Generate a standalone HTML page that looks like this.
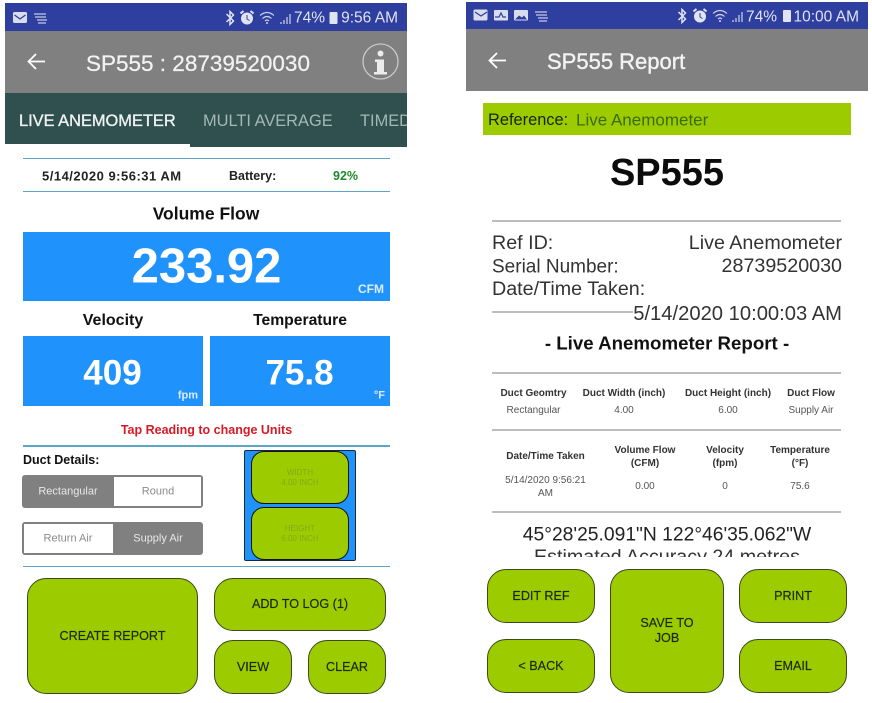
<!DOCTYPE html>
<html><head><meta charset="utf-8">
<style>
html,body{margin:0;padding:0;background:#fff}
#p{position:relative;width:872px;height:703px;overflow:hidden;background:#fff;font-family:"Liberation Sans",sans-serif;color:#111;filter:blur(.3px)}
.r{position:absolute}
.t{position:absolute;white-space:nowrap;line-height:1;transform:translateY(-50%)}
.c{transform:translate(-50%,-50%);text-align:center}
.e{transform:translate(-100%,-50%)}
.b{font-weight:bold}
.g{position:absolute;background:#9ccc00;border:1.5px solid #3a4a1c;box-sizing:border-box;border-radius:19px;color:#1d2a08;font-size:12.6px;-webkit-text-stroke:.2px #1d2a08;display:flex;align-items:center;justify-content:center;text-align:center;line-height:15px}
.l{position:absolute;height:2px;background:#bdbdbd}
.bl{position:absolute;height:1.5px;background:#5ba6c4}
</style></head><body><div id="p">

<!-- LEFT PHONE -->
<div class="r" style="left:5px;top:3px;width:402px;height:28px;background:#2e3f9f"></div>
<div class="r" style="left:5px;top:31px;width:402px;height:62px;background:#808080"></div>
<div class="r" style="left:5px;top:93px;width:402px;height:54px;background:#2f504f"></div>
<div class="r" style="left:5px;top:144px;width:185px;height:3px;background:#fff"></div>

<!-- RIGHT PHONE BARS -->
<div class="r" style="left:466px;top:2px;width:402px;height:27px;background:#2e3f9f"></div>
<div class="r" style="left:466px;top:29px;width:402px;height:62px;background:#808080"></div>

<svg class="r" style="left:0;top:0" width="872" height="703" fill="none">
 <!-- left status icons -->
 <rect x="13" y="12" width="14" height="11" rx="1.500" fill="#d8dcec"/>
 <path d="M14.500 15l5.500 4 5.500-4" stroke="#2e3f9f" stroke-width="1.300"/>
 <path d="M34 14h12M35 17h11M37 20h10M38 23h8" stroke="#c5cbe4" stroke-width="1.200"/>
 <path d="M226.500 14l7 7-3.500 3.500v-13l3.500 3.500-7 7" stroke="#e0e3f0" stroke-width="1.500"/>
 <circle cx="247" cy="18.500" r="6" fill="#e0e3f0"/>
 <path d="M240.500 13.500l3-2.500M253.500 13.500l-3-2.500" stroke="#e0e3f0" stroke-width="2"/>
 <path d="M247 15v4l2.500 1.500" stroke="#2e3f9f" stroke-width="1"/>
 <path d="M260 15.500q7-6 14 0M262.500 18.500q4.500-4 9 0M265 21q2-2 4 0" stroke="#cfd4e8" stroke-width="1.100"/>
 <circle cx="267" cy="23" r="1" fill="#cfd4e8"/>
 <path d="M281 24v-2M284 24v-4M287 24v-7M290 24v-10" stroke="#cfd4e8" stroke-width="1.200"/>
 <rect x="329.500" y="12" width="8" height="12" rx="1" fill="#e0e3f0"/>
 <!-- left back arrow -->
 <path d="M45 61.500H28.500M36 54l-7.500 7.500L36 69" stroke="#fff" stroke-width="1.800"/>
 <!-- info icon -->
 <circle cx="380.500" cy="61.500" r="17.500" stroke="#c8c8c8" stroke-width="1.300"/>
 <circle cx="380.500" cy="53.500" r="3" fill="#ececec"/>
 <path d="M375 59.500h9v12.500h3v2.500h-13v-2.500h3v-10h-2z" fill="#ececec"/>
 <!-- right status icons -->
 <rect x="473.500" y="9.500" width="14" height="11" rx="1.500" fill="#d8dcec"/>
 <path d="M475 12l6 4 6-4" stroke="#2e3f9f" stroke-width="1.300"/>
 <rect x="494" y="10" width="14" height="10.500" rx="1" fill="#d8dcec"/>
 <path d="M495 17l4 0 2-4 2 4 3 0" stroke="#2e3f9f" stroke-width="1.200"/>
 <rect x="514" y="10" width="14" height="10.500" rx="1" fill="#d8dcec"/>
 <path d="M515 19.500l4-4 3 2 2-2 3 4z" fill="#2e3f9f"/>
 <path d="M535 12h12M536 15h11M538 18h10M539 21h8" stroke="#c5cbe4" stroke-width="1.200"/>
 <path d="M678.500 12l7 7-3.500 3.500v-13l3.500 3.500-7 7" stroke="#e0e3f0" stroke-width="1.500"/>
 <circle cx="700" cy="16.500" r="6" fill="#e0e3f0"/>
 <path d="M693.500 11.500l3-2.500M706.500 11.500l-3-2.500" stroke="#e0e3f0" stroke-width="2"/>
 <path d="M700 13v4l2.500 1.500" stroke="#2e3f9f" stroke-width="1"/>
 <path d="M713 13.500q7-6 14 0M715.500 16.500q4.500-4 9 0M718 19q2-2 4 0" stroke="#cfd4e8" stroke-width="1.100"/>
 <circle cx="720" cy="21" r="1" fill="#cfd4e8"/>
 <path d="M733 22v-2M736 22v-4M739 22v-7M742 22v-10" stroke="#cfd4e8" stroke-width="1.200"/>
 <rect x="783" y="10" width="8" height="12" rx="1" fill="#e0e3f0"/>
 <!-- right back arrow -->
 <path d="M506 60.500H489.500M497 53l-7.500 7.500L497 68" stroke="#fff" stroke-width="1.800"/>
</svg>

<div class="t e" style="left:325px;top:18px;font-size:15.500px;color:#dfe2f0">74%</div>
<div class="t e" style="left:398px;top:18px;font-size:15.500px;color:#dfe2f0">9:56 AM</div>
<div class="t" style="left:86px;top:63.500px;font-size:22.500px;color:#f2f2f2;-webkit-text-stroke:.25px #f2f2f2">SP555 : 28739520030</div>

<div class="t" style="left:19px;top:121px;font-size:16.400px;color:#eef2f2;-webkit-text-stroke:.35px #eef2f2">LIVE ANEMOMETER</div>
<div class="t" style="left:203px;top:121px;font-size:16.400px;color:#a3b8b6">MULTI AVERAGE</div>
<div class="r" style="left:360px;top:110px;width:47px;height:22px;overflow:hidden"><div class="t" style="left:0;top:11px;font-size:16.400px;color:#a3b8b6">TIMED</div></div>

<div class="bl" style="left:23px;top:157.500px;width:367px"></div>
<div class="bl" style="left:23px;top:190.500px;width:367px"></div>
<div class="t b" style="left:42px;top:176px;font-size:13px;letter-spacing:.5px;color:#222">5/14/2020 9:56:31 AM</div>
<div class="t b" style="left:229px;top:176px;font-size:12.500px;color:#222">Battery:</div>
<div class="t b" style="left:333px;top:176px;font-size:12.500px;color:#1d8a2a">92%</div>

<div class="t c b" style="left:206px;top:213.500px;font-size:17.500px">Volume Flow</div>
<div class="r" style="left:23px;top:232px;width:367px;height:69px;background:#2092fb"></div>
<div class="t c b" style="left:206.500px;top:267px;font-size:49px;color:#fff">233.92</div>
<div class="t e b" style="left:384px;top:288.500px;font-size:12px;color:#dcecff">CFM</div>

<div class="t c b" style="left:113px;top:321px;font-size:16px">Velocity</div>
<div class="t c b" style="left:300px;top:321px;font-size:15.700px">Temperature</div>
<div class="r" style="left:23px;top:336px;width:180px;height:70px;background:#2092fb"></div>
<div class="r" style="left:210px;top:336px;width:180px;height:70px;background:#2092fb"></div>
<div class="t c b" style="left:112.500px;top:373px;font-size:35px;color:#fff">409</div>
<div class="t c b" style="left:299.500px;top:373px;font-size:35px;color:#fff">75.8</div>
<div class="t e b" style="left:198px;top:395.500px;font-size:11px;color:#dcecff">fpm</div>
<div class="t e b" style="left:385px;top:395.500px;font-size:11px;color:#dcecff">°F</div>

<div class="t c b" style="left:206.500px;top:430px;font-size:12.500px;color:#d61a26">Tap Reading to change Units</div>
<div class="bl" style="left:23px;top:445px;width:367px"></div>
<div class="t b" style="left:23px;top:459.500px;font-size:12.500px">Duct Details:</div>

<!-- segments -->
<div class="r" style="left:22px;top:475px;width:181px;height:33px;background:#808080;border-radius:3px"></div>
<div class="r" style="left:114px;top:477px;width:87px;height:29px;background:#fff"></div>
<div class="t c" style="left:68px;top:492px;font-size:11px;color:#e8e8e8">Rectangular</div>
<div class="t c" style="left:158px;top:492px;font-size:11px;color:#8a8a8a">Round</div>
<div class="r" style="left:22px;top:522px;width:181px;height:33px;background:#808080;border-radius:3px"></div>
<div class="r" style="left:24px;top:524px;width:89px;height:29px;background:#fff"></div>
<div class="t c" style="left:68px;top:539px;font-size:11px;color:#8a8a8a">Return Air</div>
<div class="t c" style="left:158px;top:539px;font-size:11px;color:#e8e8e8">Supply Air</div>

<!-- duct diagram -->
<div class="r" style="left:244px;top:450px;width:112px;height:111px;background:#2092fb;border:1.500px solid #1a2a3a;box-sizing:border-box;border-radius:2px"></div>
<div class="g" style="left:251px;top:451px;width:98px;height:53px;border-color:#111;border-radius:13px;font-size:8px;line-height:10px;color:#87a81e;-webkit-text-stroke:0">WIDTH<br>4.00 INCH</div>
<div class="g" style="left:251px;top:507px;width:98px;height:53px;border-color:#111;border-radius:13px;font-size:8px;line-height:10px;color:#87a81e;-webkit-text-stroke:0">HEIGHT<br>6.00 INCH</div>

<div class="bl" style="left:23px;top:565.500px;width:367px"></div>

<div class="g" style="left:27px;top:578px;width:171px;height:116px">CREATE REPORT</div>
<div class="g" style="left:214px;top:578px;width:172px;height:53px">ADD TO LOG (1)</div>
<div class="g" style="left:214px;top:640px;width:78px;height:54px">VIEW</div>
<div class="g" style="left:308px;top:640px;width:78px;height:54px">CLEAR</div>

<!-- RIGHT PHONE CONTENT -->
<div class="t e" style="left:777px;top:16.500px;font-size:15.500px;color:#dfe2f0">74%</div>
<div class="t e" style="left:859px;top:16.500px;font-size:15.500px;color:#dfe2f0">10:00 AM</div>
<div class="t" style="left:547px;top:62px;font-size:22px;color:#f2f2f2;-webkit-text-stroke:.4px #f2f2f2">SP555 Report</div>

<div class="r" style="left:483px;top:103px;width:368px;height:32px;background:#9ccc00"></div>
<div class="t" style="left:488px;top:120px;font-size:16.400px;color:#16260a">Reference:</div>
<div class="t" style="left:576px;top:120px;font-size:17px;color:#3c6a10">Live Anemometer</div>

<div class="t c b" style="left:667px;top:172.500px;font-size:38px;color:#0c0c0c">SP555</div>

<div class="l" style="left:492px;top:220px;width:349px"></div>
<div class="t" style="left:492px;top:243.500px;font-size:19.700px;color:#333">Ref ID:</div>
<div class="t e" style="left:842px;top:243.500px;font-size:19.700px;color:#333">Live Anemometer</div>
<div class="t" style="left:492px;top:267px;font-size:19px;color:#333">Serial Number:</div>
<div class="t e" style="left:842px;top:267px;font-size:19.700px;color:#333">28739520030</div>
<div class="t" style="left:492px;top:290px;font-size:19.700px;color:#333">Date/Time Taken:</div>
<div class="l" style="left:492px;top:310.500px;width:141px"></div>
<div class="t e" style="left:842px;top:313.500px;font-size:20.200px;color:#333">5/14/2020 10:00:03 AM</div>
<div class="t c b" style="left:667px;top:343.500px;font-size:18.700px">- Live Anemometer Report -</div>

<div class="l" style="left:492px;top:372px;width:349px"></div>
<div class="t c b" style="left:533.500px;top:394px;font-size:10px;color:#333">Duct Geomtry</div>
<div class="t c b" style="left:624px;top:394px;font-size:10px;color:#333">Duct Width (inch)</div>
<div class="t c b" style="left:728px;top:394px;font-size:10px;color:#333">Duct Height (inch)</div>
<div class="t c b" style="left:811px;top:394px;font-size:10px;color:#333">Duct Flow</div>
<div class="t c" style="left:533.500px;top:411px;font-size:10px;color:#555">Rectangular</div>
<div class="t c" style="left:624px;top:411px;font-size:10px;color:#555">4.00</div>
<div class="t c" style="left:728px;top:411px;font-size:10px;color:#555">6.00</div>
<div class="t c" style="left:811px;top:411px;font-size:10px;color:#555">Supply Air</div>

<div class="l" style="left:492px;top:429px;width:349px"></div>
<div class="t c b" style="left:545.500px;top:457px;font-size:10px;color:#333">Date/Time Taken</div>
<div class="t c b" style="left:645px;top:457px;font-size:10px;line-height:13px;color:#333">Volume Flow<br>(CFM)</div>
<div class="t c b" style="left:725px;top:457px;font-size:10px;line-height:13px;color:#333">Velocity<br>(fpm)</div>
<div class="t c b" style="left:800px;top:457px;font-size:10px;line-height:13px;color:#333">Temperature<br>(°F)</div>
<div class="t c" style="left:545.500px;top:487px;font-size:10px;line-height:13px;color:#555">5/14/2020 9:56:21<br>AM</div>
<div class="t c" style="left:645px;top:487px;font-size:10px;color:#555">0.00</div>
<div class="t c" style="left:725px;top:487px;font-size:10px;color:#555">0</div>
<div class="t c" style="left:800px;top:487px;font-size:10px;color:#555">75.6</div>

<div class="l" style="left:492px;top:511px;width:349px"></div>
<div class="t c" style="left:667px;top:534.500px;font-size:19.300px;color:#222">45°28'25.091"N 122°46'35.062"W</div>
<div class="r" style="left:492px;top:545px;width:349px;height:12px;overflow:hidden"><div class="t c" style="left:175px;top:13px;font-size:19.700px;color:#333">Estimated Accuracy 24 metres</div></div>

<div class="g" style="left:487px;top:569px;width:108px;height:54px">EDIT REF</div>
<div class="g" style="left:487px;top:639px;width:108px;height:54px">&lt; BACK</div>
<div class="g" style="left:610px;top:569px;width:114px;height:124px">SAVE TO<br>JOB</div>
<div class="g" style="left:739px;top:569px;width:108px;height:54px">PRINT</div>
<div class="g" style="left:739px;top:639px;width:108px;height:54px">EMAIL</div>

</div></body></html>
